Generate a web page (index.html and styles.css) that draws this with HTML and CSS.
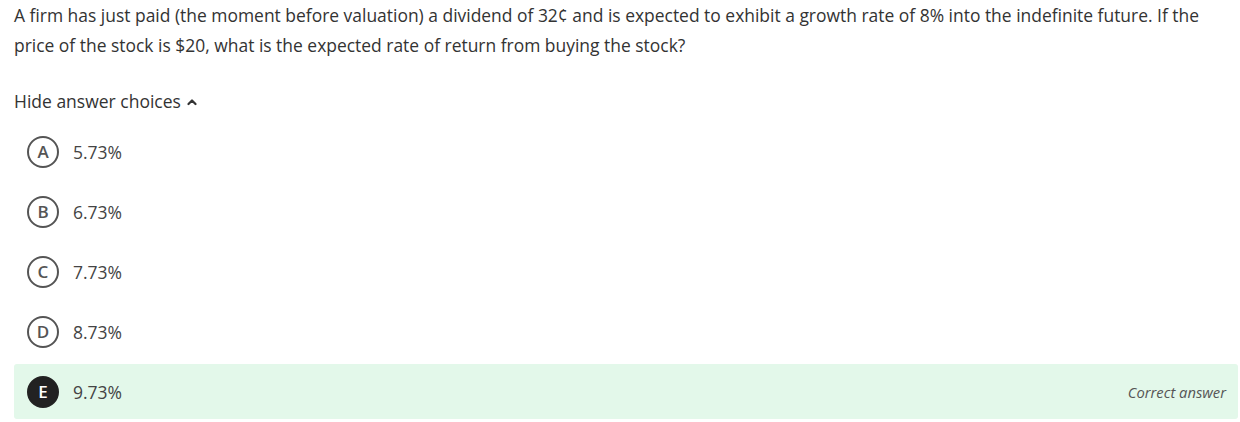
FILE: index.html
```html
<!DOCTYPE html>
<html>
<head>
<meta charset="utf-8">
<link rel="stylesheet" href="styles.css">
</head>
<body>
<div class="page">
  <p class="question">A firm has just paid (the moment before valuation) a dividend of 32¢ and is expected to exhibit a growth rate of 8% into the indefinite future. If the price of the stock is $20, what is the expected rate of return from buying the stock?</p>
  <div class="toggle">Hide answer choices
    <svg class="chev" width="10" height="8" viewBox="0 0 10 8"><path d="M1.5 6 L5 2.5 L8.5 6" fill="none" stroke="#333" stroke-width="2.2" stroke-linecap="round" stroke-linejoin="round"/></svg>
  </div>
  <ul class="choices">
    <li class="choice"><span class="letter">A</span><span class="text">5.73%</span></li>
    <li class="choice"><span class="letter">B</span><span class="text">6.73%</span></li>
    <li class="choice"><span class="letter">C</span><span class="text">7.73%</span></li>
    <li class="choice"><span class="letter">D</span><span class="text">8.73%</span></li>
    <li class="choice correct"><span class="letter">E</span><span class="text">9.73%</span><span class="note">Correct answer</span></li>
  </ul>
</div>
</body>
</html>
```
FILE: styles.css
```css
html, body {
  margin: 0;
  padding: 0;
  background: #fff;
}
body {
  font-family: "Open Sans", "DejaVu Sans", sans-serif;
  color: #333;
}
.page {
  padding: 0 2px 0 14px;
}
.question {
  margin: 0;
  font-size: 17.45px;
  line-height: 30px;
  color: #333;
}
.toggle {
  margin-top: 29px;
  font-size: 17.5px;
  line-height: 24px;
  color: #333;
  display: flex;
  align-items: center;
}
.chev {
  margin-left: 6px;
  margin-top: 1px;
}
.choices {
  list-style: none;
  margin: 11px 0 0 0;
  padding: 0;
  display: flex;
  flex-direction: column;
  gap: 5px;
}
.choice {
  height: 55px;
  display: flex;
  align-items: center;
  padding-left: 13px;
  padding-right: 12px;
  border-radius: 3px;
}
.letter {
  width: 28px;
  height: 28px;
  border: 2px solid #555;
  border-radius: 50%;
  display: flex;
  align-items: center;
  justify-content: center;
  font-size: 17px;
  font-weight: 600;
  color: #555;
  flex-shrink: 0;
}
.text {
  margin-left: 14px;
  font-size: 17.5px;
  color: #444;
}
.correct {
  background: #e3f8ea;
}
.correct .letter {
  background: #222;
  border-color: #222;
  color: #fff;
}
.note {
  margin-left: auto;
  font-style: italic;
  font-size: 14.75px;
  color: #555;
}
```
